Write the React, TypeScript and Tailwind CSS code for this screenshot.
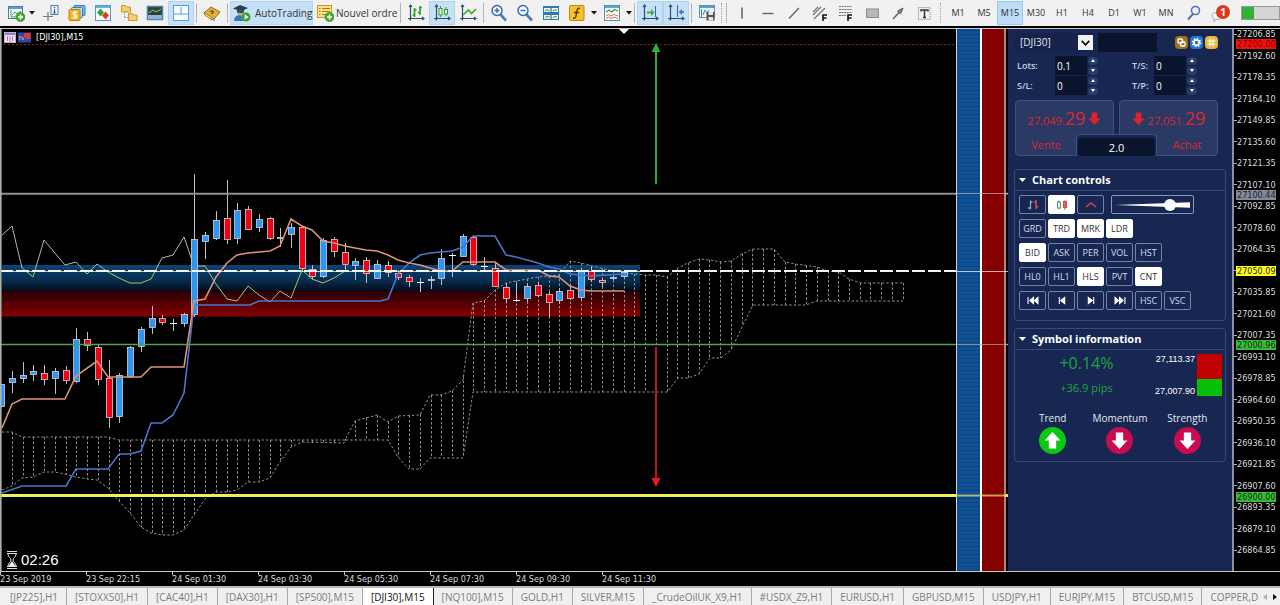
import { useState, type ReactNode } from "react";
import clsx from "clsx";

type Candle = [high: number, top: number, bottom: number, low: number, color: string];

const UP = "#2d96f0";
const DOWN = "#f00010";
const DOJI = "#ffffff";

const candles: Candle[] = [
  [384, 384, 407, 407, UP], [371, 378, 383, 393, UP], [362, 375, 379, 383, UP],
  [365, 371, 375, 381, UP], [365, 373, 380, 385, DOWN], [368, 371, 379, 394, UP],
  [366, 370, 381, 384, DOWN], [328, 339, 382, 383, UP], [332, 339, 346, 351, DOWN],
  [344, 347, 380, 385, DOWN], [360, 378, 418, 428, DOWN], [373, 375, 417, 423, UP],
  [346, 347, 377, 378, UP], [327, 329, 347, 352, UP], [306, 318, 328, 334, UP],
  [315, 318, 323, 325, DOWN], [319, 323, 324, 331, DOJI], [313, 314, 324, 327, UP],
  [174, 239, 315, 317, UP], [232, 235, 242, 259, UP], [211, 220, 239, 240, UP],
  [180, 218, 240, 244, DOWN], [203, 210, 239, 244, UP], [206, 209, 230, 230, DOWN],
  [214, 219, 228, 232, UP], [217, 218, 239, 240, DOWN], [228, 237, 239, 247, UP],
  [223, 227, 235, 248, UP], [226, 227, 269, 272, DOWN], [265, 269, 277, 279, DOWN],
  [238, 240, 277, 278, UP], [237, 239, 252, 257, DOWN], [243, 252, 265, 270, DOWN],
  [258, 261, 266, 280, UP], [257, 260, 274, 283, DOWN], [260, 264, 279, 279, UP],
  [261, 265, 273, 277, DOWN], [270, 273, 278, 280, DOWN], [275, 277, 282, 287, DOWN],
  [278, 282, 283, 292, DOJI], [276, 279, 281, 289, UP], [249, 258, 279, 285, UP],
  [253, 255, 256, 277, DOJI], [234, 236, 257, 257, UP], [236, 237, 265, 266, DOWN],
  [257, 266, 267, 270, DOJI], [263, 268, 287, 287, DOWN], [283, 287, 299, 303, DOWN],
  [283, 300, 301, 302, DOJI], [283, 286, 299, 302, UP], [282, 285, 296, 297, DOWN],
  [292, 294, 303, 317, DOWN], [288, 291, 301, 304, UP], [287, 290, 299, 300, DOWN],
  [268, 270, 298, 300, UP], [267, 271, 280, 282, DOWN], [278, 280, 283, 287, DOWN],
  [276, 277, 279, 280, UP], [271, 272, 277, 278, UP],
];

const tenkan =
  "2,428 12,404 22,399 65,399 76,376 97,361 108,377 141,377 151,367 184,367 194,301 205,299 216,277 227,263 237,255 248,253 259,252 270,251 280,246 291,219 302,226 312,230 323,241 334,243 345,246 355,248 366,250 377,251 388,255 398,260 409,263 420,265 430,268 441,271 452,271 463,262 495,262 506,270 538,270 549,276 559,277 570,286 581,290 591,291 624,291";
const kijun =
  "2,493 22,486 66,486 76,469 108,469 119,454 130,454 141,451 151,423 162,423 173,415 184,393 194,305 250,305 259,301 380,301 388,299 398,274 409,263 420,255 430,253 441,252 452,251 463,247 473,236 495,236 506,255 516,257 527,260 538,263 549,267 559,269 570,274 591,276 624,274";
const chikou =
  "2,235 12,226 22,268 33,277 44,240 65,265 76,262 87,274 97,264 108,272 119,278 130,283 141,283 151,279 162,258 173,255 184,237 194,266 205,266 216,284 227,299 237,301 248,286 259,295 270,302 280,291 291,298 302,270 312,279 323,283 334,278 345,271";

const spanTop = [
  [2, 432], [12, 432], [22, 437], [108, 437], [119, 440], [345, 440], [355, 421], [366, 418],
  [377, 415], [388, 422], [398, 416], [420, 415], [430, 395], [441, 395], [452, 391], [463, 380],
  [473, 303], [484, 301], [495, 290], [506, 283], [516, 281], [538, 277], [559, 275], [570, 261],
  [581, 263], [592, 266], [613, 271], [635, 274], [645, 275], [656, 275], [667, 277], [678, 268],
  [688, 263], [699, 259], [710, 260], [721, 262], [731, 261], [742, 254], [753, 249], [774, 249],
  [785, 262], [795, 264], [817, 267], [828, 271], [839, 272], [849, 279], [860, 283], [903, 283],
];
const spanBottom = [
  [2, 490], [12, 486], [22, 478], [33, 477], [44, 472], [55, 472], [65, 474], [76, 477],
  [87, 479], [97, 480], [108, 488], [119, 501], [130, 513], [141, 527], [151, 533], [162, 535],
  [173, 535], [184, 530], [194, 515], [205, 499], [216, 492], [227, 492], [237, 490], [248, 482],
  [259, 482], [270, 478], [280, 462], [291, 447], [302, 442], [344, 443], [346, 440], [388, 440],
  [398, 457], [409, 469], [420, 469], [430, 458], [463, 458], [473, 392], [667, 392], [678, 378],
  [688, 378], [699, 374], [710, 358], [721, 358], [731, 350], [742, 327], [753, 305], [806, 305],
  [817, 301], [903, 301],
];

const barX = (i: number) => 1.3 + i * 10.73;

function valueAt(points: number[][], x: number) {
  for (let i = 1; i < points.length; i++) {
    const [x0, y0] = points[i - 1];
    const [x1, y1] = points[i];
    if (x <= x1) return y0 + ((y1 - y0) * (x - x0)) / (x1 - x0);
  }
  return points[points.length - 1][1];
}

const timeLabels = [
  "23 Sep 2019", "23 Sep 22:15", "24 Sep 01:30", "24 Sep 03:30",
  "24 Sep 05:30", "24 Sep 07:30", "24 Sep 09:30", "24 Sep 11:30",
];

const TOP_PRICE = 27206.85;
const PRICE_STEP = 14.25;
const prices = Array.from({ length: 25 }, (_, k) => (TOP_PRICE - k * PRICE_STEP).toFixed(2));

const priceTags = [
  { price: 27200.0, style: "bg-[#f01010] text-[#900000]" },
  { price: 27100.44, style: "bg-[#84889a] text-[#20242c]" },
  { price: 27050.09, style: "bg-[#fcfc20] text-[#303000]" },
  { price: 27000.96, style: "bg-[#3cb83c] text-[#063806]" },
  { price: 26900.0, style: "bg-[#3cb83c] text-[#063806]" },
];

const symbolTabs = [
  "[JP225],H1", "[STOXX50],H1", "[CAC40],H1", "[DAX30],H1", "[SP500],M15", "[DJI30],M15",
  "[NQ100],M15", "GOLD,H1", "SILVER,M15", "_CrudeOilUK_X9,H1", "#USDX_Z9,H1", "EURUSD,H1",
  "GBPUSD,M15", "USDJPY,H1", "EURJPY,M15", "BTCUSD,M15", "COPPER,D",
];

const timeframes = ["M1", "M5", "M15", "M30", "H1", "H4", "D1", "W1", "MN"];

/* ---------- toolbar ---------- */

function Icon({ children }: { children: ReactNode }) {
  return (
    <svg viewBox="0 0 18 18" className="h-[18px] w-[18px] shrink-0" fill="none">
      {children}
    </svg>
  );
}

function Tool({ label, active, narrow, children }: { label: string; active?: boolean; narrow?: boolean; children: ReactNode }) {
  return (
    <button
      aria-label={label}
      className={clsx(
        "flex h-6 shrink-0 items-center justify-center",
        narrow ? "w-6" : "w-[26px]",
        active && "border border-[#b0d4f0] bg-[#c6e0f7]"
      )}
    >
      <Icon>{children}</Icon>
    </button>
  );
}

function Caret({ label }: { label: string }) {
  return (
    <button aria-label={label} className="flex h-6 w-[7px] shrink-0 items-center justify-center">
      <svg viewBox="0 0 6 4" className="h-1 w-1.5">
        <path d="M0 0h6L3 3.6z" fill="#111" />
      </svg>
    </button>
  );
}

const Sep = () => <div className="mx-0.5 h-5 w-px shrink-0 bg-[#b4b4b4]" />;
const Grip = () => <div className="mx-px h-5 w-0.5 shrink-0 border-l border-dotted border-[#a0a0a0]" />;

const Axes = () => (
  <path d="M3.5 1v15.5M1 14.500h15.500M2 3l1.500-2L5 3M15 13l2 1.500-2 1.500M2.500 15.500l2-2" stroke="#34506e" strokeWidth="1.200" />
);

const Plus = () => (
  <>
    <circle cx="13.500" cy="13" r="4.500" fill="#3fae2f" stroke="#2a8020" strokeWidth=".6" />
    <path d="M11 13h5M13.500 10.500v5" stroke="#fff" strokeWidth="1.600" />
  </>
);

function Toolbar() {
  const [frame, setFrame] = useState("M15");
  return (
    <header className="flex h-[26px] shrink-0 items-center overflow-hidden bg-[#f1f1f1] pl-1 text-[10px] text-[#333]">
      <Tool label="New chart" narrow>
        <rect x="1.500" y="2.500" width="14" height="12" fill="#f4faff" stroke="#4a7ca8" />
        <path d="M2 4h13" stroke="#5aa0d0" strokeWidth="2" />
        <path d="M4 6v7h10M5 11l3-3 2 2 4-3" stroke="#4f9a5a" />
        <Plus />
      </Tool>
      <Caret label="Chart list" />
      <div className="w-[3px] shrink-0" />
      <Tool label="Market watch">
        <path d="M6 8v9M1 12.500h10" stroke="#777" strokeWidth="1.200" />
        <rect x="9" y="1.500" width="7" height="9" fill="#eaf4ff" stroke="#5580aa" />
        <path d="M12.500 3v1.300M12.500 5.500v3.500M11.500 9h2" stroke="#234a80" strokeWidth="1.200" />
      </Tool>
      <Tool label="Symbols">
        <rect x="6" y="1.500" width="11" height="10" rx="1" fill="#7db9ee" stroke="#3a78b4" />
        <rect x="3.500" y="3.500" width="11" height="10" rx="1" fill="#b6dafa" stroke="#3a78b4" />
        <rect x="1" y="5.500" width="11" height="11" rx="1" fill="#f2b822" stroke="#b98208" />
        <path d="M9 8.500c-1-1.200-4-1-4 .8 0 2 4 1 4 2.900 0 1.800-3 2-4.300.7M6.900 7v8" stroke="#fff" strokeWidth="1.200" />
      </Tool>
      <Tool label="Trade">
        <rect x="1.500" y="1.500" width="15" height="15" fill="#f6fbff" stroke="#5a9ac4" />
        <path d="M2 3h14" stroke="#68b2e0" strokeWidth="2" />
        <path d="M6.500 4.500L3 8.500l3.500 4 3.500-4z" fill="#2fa32f" />
        <path d="M11.500 15.500L8 11.500l3.500-4 3.500 4z" fill="#e33a22" />
      </Tool>
      <Tool label="Navigator">
        <path d="M1.500 1.500h4l1 1.500h4v5h-9zM8.500 9.500h4l1 1.500h3.500v5.500H8.500z" fill="#f3d06c" stroke="#c89a30" />
        <path d="M4.500 8v5.500H8" stroke="#888" strokeDasharray="1 1" />
      </Tool>
      <Tool label="Terminal">
        <rect x="1.500" y="2.500" width="15" height="13" fill="#2c4238" stroke="#4e82b6" strokeWidth="1.500" />
        <path d="M2 11h14v4H2z" fill="#8fb4d8" />
        <path d="M3 9l4-3 3 2 5-3" stroke="#a8c848" />
      </Tool>
      <Tool label="Strategy tester" active>
        <rect x="1.500" y="1.500" width="15" height="15" fill="#f8fcff" stroke="#5ba0dc" />
        <path d="M2 10h14M9 3v7" stroke="#5ba0dc" />
      </Tool>
      <Sep />
      <Tool label="MetaEditor">
        <path d="M1 9l7-6 9 5-6 7-2 1z" fill="#e2b43a" stroke="#8c6a14" />
        <path d="M1 9l9 5 1.500 2.500L2 11.500z" fill="#fff6d0" stroke="#8c6a14" strokeWidth=".8" />
        <path d="M7 8c1-2 4-1 3 .6-.5.8-1.500.8-1.500 1.600" stroke="#7a4a00" strokeWidth="1.400" />
      </Tool>
      <Sep />
      <button className="flex h-6 w-[83px] shrink-0 items-center gap-1 border border-[#b4d6f0] bg-[#c6e0f7] pl-0.5 font-['Open_Sans',sans-serif]">
        <Icon>
          <path d="M1 17c0-4 3-6 6-6s6 2 6 6z" fill="#3b78ba" />
          <circle cx="7.500" cy="8" r="3.500" fill="#e0ac7c" />
          <path d="M0 4.500L7 1l8 3-7 3.500z" fill="#2c3f52" />
          <path d="M4 6v2.500c2 1 5 1 7 0V6" fill="#384c60" />
          <circle cx="13" cy="13" r="4.500" fill="#36a634" />
          <path d="M11.700 10.600v4.800l4-2.400z" fill="#fff" />
        </Icon>
        AutoTrading
      </button>
      <button className="flex h-6 w-[85px] shrink-0 items-center gap-0.5 pl-[3px] font-['Open_Sans',sans-serif] whitespace-nowrap">
        <Icon>
          <rect x="1.500" y="1.500" width="14" height="12" fill="#fae28a" stroke="#c49a28" />
          <path d="M6 4.500h8M6 7.500h8M6 10.500h8M3 4.500h1.500M3 7.500h1.500M3 10.500h1.500" stroke="#a87a18" />
          <Plus />
        </Icon>
        Nouvel ordre
      </button>
      <Sep />
      <Tool label="Bar chart">
        <Axes />
        <path d="M7.500 4v9M5.500 11h2M7.500 6h2M13 2v9M11 8.500h2M13 3.500h2" stroke="#2fa02c" strokeWidth="1.700" />
      </Tool>
      <Tool label="Candlesticks" active>
        <Axes />
        <path d="M7.500 2v11M13 3v9" stroke="#2fa02c" />
        <rect x="6" y="4.500" width="3" height="6.500" fill="#e9ffe6" stroke="#2fa02c" />
        <rect x="11.500" y="5.500" width="3" height="4.500" fill="#e9ffe6" stroke="#2fa02c" />
      </Tool>
      <Tool label="Line chart">
        <Axes />
        <path d="M4 11l5.500-5 3 3.500L17 5" stroke="#3fa62e" strokeWidth="1.600" />
      </Tool>
      <Sep />
      <Tool label="Zoom in">
        <path d="M10 10l6 6.500" stroke="#5478ac" strokeWidth="2.600" />
        <circle cx="7" cy="6.500" r="5" fill="#f4f9ff" stroke="#3668a8" strokeWidth="1.400" />
        <path d="M4.500 6.500h5M7 4v5" stroke="#3668a8" strokeWidth="1.400" />
      </Tool>
      <Tool label="Zoom out">
        <path d="M10 10l6 6.500" stroke="#5478ac" strokeWidth="2.600" />
        <circle cx="7" cy="6.500" r="5" fill="#f4f9ff" stroke="#3668a8" strokeWidth="1.400" />
        <path d="M4.500 6.500h5" stroke="#3668a8" strokeWidth="1.400" />
      </Tool>
      <Tool label="Tile windows">
        <rect x="1" y="2" width="16" height="14" fill="#3576ae" />
        <path d="M2 4h6.500v4H2zM9.700 4H16v4H9.700zM2 11h6.500v4H2zM9.700 11H16v4H9.700z" fill="#e9f8e8" />
        <path d="M3 7l2-1.500L7.500 7M11 7l2-1.500L15 6.500M3 13.500l2-1 2.500.5M11 13.500l2-1 2 .5" stroke="#3a9444" />
      </Tool>
      <Tool label="Indicators">
        <rect x="1.500" y="1.500" width="14.500" height="15" rx="1" fill="#f6c02e" stroke="#b88a14" />
        <path d="M12 4.500c-2-.8-2.800.6-3.200 3L8 12c-.4 2-1.300 2.500-3 2M6 8.500h5" stroke="#5a3c00" strokeWidth="1.400" />
      </Tool>
      <Caret label="Indicator list" />
      <div className="w-0.5 shrink-0" />
      <Tool label="Templates">
        <rect x="1.500" y="1.500" width="15" height="15" fill="#fdfdf8" stroke="#5a92b4" />
        <path d="M2 3h14" stroke="#60a8d4" strokeWidth="2" />
        <path d="M3 8l3-2 2.500 2 3-2.500L15 7" stroke="#2f9c34" strokeWidth="1.300" />
        <path d="M3 12l2.500-1.500L8 12l3-1.500 4 1.500M3 14.500L5.500 13 8 14.500 11 13l4 1.500" stroke="#c87060" />
      </Tool>
      <Caret label="Template list" />
      <Sep />
      <Tool label="Auto scroll" active>
        <Axes />
        <path d="M14.500 2v11" stroke="#3668a8" />
        <path d="M6 7.500h4V5l3.500 3.500L10 12V9.500H6z" fill="#4aa848" />
      </Tool>
      <Tool label="Chart shift" active>
        <Axes />
        <path d="M10.500 1v12" stroke="#3668a8" />
        <path d="M17 7h-2V5l-3.500 3 3.500 3V9h2z" fill="#4878c0" />
      </Tool>
      <Sep />
      <Tool label="Save picture">
        <rect x="1.500" y="1.500" width="15" height="12" fill="#eef7ff" stroke="#5a92b4" />
        <path d="M2 3h14" stroke="#58a2cc" strokeWidth="2" />
        <path d="M3.500 5v8M5 11l2-5 2 3 2-3" stroke="#3a8ab0" />
        <path d="M8.500 8h8v8.500h-8z" fill="#555" />
        <path d="M10.500 8h4.500v3h-4.500zM10.500 13h4.500v3.500h-4.500z" fill="#e4e4e4" />
      </Tool>
      <Grip />
      <Sep />
      <Tool label="Vertical line"><path d="M9 3.500v11" stroke="#555" strokeWidth="1.400" /></Tool>
      <Tool label="Horizontal line"><path d="M3.500 9.500h11" stroke="#666" strokeWidth="1.400" /></Tool>
      <Tool label="Trend line"><path d="M4 14.500L14 4" stroke="#666" strokeWidth="1.400" /></Tool>
      <Tool label="Fibonacci channel">
        <path d="M2 11l8-8M3 15L14 4M7 3L2 8" stroke="#777" strokeWidth="1.300" />
        <path d="M12 17v-6h4M12 14h3.500" stroke="#111" strokeWidth="1.600" />
      </Tool>
      <Tool label="Fibonacci retracement">
        <path d="M2 2.500h13M2 5.500h13M2 8.500h13M2 11.500h7" stroke="#777" strokeDasharray="2 .6" />
        <path d="M11 17v-6h4M11 14h3.500" stroke="#111" strokeWidth="1.600" />
      </Tool>
      <Tool label="Rectangle"><rect x="3.500" y="5" width="12" height="8.500" fill="#b8b8b8" stroke="#8c8c8c" /></Tool>
      <Tool label="Arrow">
        <path d="M4 15l6-6.500" stroke="#666" strokeWidth="1.600" />
        <path d="M14 4L8.500 7l3 3z" fill="#888" stroke="#555" />
      </Tool>
      <Tool label="Text">
        <rect x="3.500" y="3.500" width="11.500" height="12" stroke="#888" strokeDasharray="1 1" />
        <path d="M6 7.500V6h7v1.500M9.500 6v7.500M8 13.500h3" stroke="#333" strokeWidth="1.500" />
      </Tool>
      <div className="flex w-2 shrink-0 justify-center"><Grip /></div>
      {timeframes.map((t) => (
        <button
          key={t}
          onClick={() => setFrame(t)}
          className={clsx(
            "h-6 w-[26px] shrink-0 text-center font-['Open_Sans',sans-serif] text-[9px]",
            t === frame && "border border-[#9cc8ec] bg-[#bcdcf8]"
          )}
        >
          {t}
        </button>
      ))}
      <div className="w-0.5 shrink-0" />
      <Tool label="Search">
        <path d="M8 10l-5 5.500" stroke="#5a70b0" strokeWidth="2" />
        <circle cx="10.500" cy="6.500" r="4" fill="#eef4ff" stroke="#5a70b0" strokeWidth="1.600" />
      </Tool>
      <button aria-label="Notifications" className="relative ml-0.5 flex h-6 w-7 shrink-0 items-center">
        <svg viewBox="0 0 28 24" className="h-6 w-7">
          <path d="M3 14c0-3 10-3 10 1 0 3-4 4-6 3l-2 3v-3.500C3.500 17 3 15.500 3 14z" fill="#f4f4f4" stroke="#aaa" />
          <circle cx="14" cy="11" r="7" fill="#db3a22" />
        </svg>
        <span className="absolute top-[5px] left-0 w-7 text-center text-[10px] leading-3 font-bold text-white">1</span>
      </button>
      <div className="ml-1 flex h-3.5 flex-1 border border-[#999] bg-[#d4d6d4]">
        <div className="w-3 bg-[#2fb42f]" />
      </div>
    </header>
  );
}

/* ---------- chart ---------- */

function Plot() {
  const path = (pts: number[][]) => pts.map((p) => p.join(",")).join(" ");
  const stripes = Array.from({ length: 136 }, (_, i) => 30 + i * 4);
  return (
    <svg viewBox="0 29 1008 542" preserveAspectRatio="none" className="absolute inset-0 h-full w-full" fill="none">
      <defs>
        <linearGradient id="blueZone" x1="0" y1="0" x2="0" y2="1">
          <stop offset="0" stopColor="#0b4274" />
          <stop offset=".6" stopColor="#072c4e" />
          <stop offset="1" stopColor="#030c18" />
        </linearGradient>
        <linearGradient id="redZone" x1="0" y1="0" x2="0" y2="1">
          <stop offset="0" stopColor="#260004" />
          <stop offset="1" stopColor="#860000" />
        </linearGradient>
        <linearGradient id="chikouLine" gradientUnits="userSpaceOnUse" x1="0" y1="262" x2="0" y2="270">
          <stop offset="0" stopColor="#b8b8a8" />
          <stop offset="1" stopColor="#a4c470" />
        </linearGradient>
      </defs>
      <rect x="2" y="265" width="638" height="26" fill="url(#blueZone)" />
      <rect x="2" y="291" width="638" height="25.500" fill="url(#redZone)" />

      <g stroke="#b4b4aa" strokeWidth="1" strokeDasharray="2.500 2" opacity=".8">
        <polyline points={path(spanTop)} />
        <polyline points={path(spanBottom)} />
        {Array.from({ length: 84 }, (_, k) => k + 1).map((i) => {
          const x = Math.round(barX(i)) + 0.5;
          return <path key={i} d={`M${x} ${valueAt(spanTop, x)}V${valueAt(spanBottom, x)}`} />;
        })}
      </g>

      <path d="M0 44.500H956" stroke="#70282e" strokeDasharray="2 2" />
      <polyline points={chikou} stroke="url(#chikouLine)" />

      {candles.map(([high, top, bottom, low, color], i) => {
        const x = Math.round(barX(i));
        return (
          <g key={i}>
            <path d={`M${x + 0.5} ${high}V${low}`} stroke="#c0c0c0" />
            {color === DOJI ? (
              <rect x={x - 3} y={top} width="7" height="1" fill={color} />
            ) : (
              <rect x={x - 2.5} y={top + 0.5} width="6" height={Math.max(bottom - top - 1, 1)} fill={color} stroke="#d8d0d8" strokeWidth=".8" />
            )}
          </g>
        );
      })}

      <polyline points={kijun} stroke="#4c74cc" strokeWidth="1.600" />
      <polyline points={tenkan} stroke="#dc9478" strokeWidth="1.600" />

      <path d="M0 193.800H1008" stroke="#8c8e9a" strokeWidth="2" />
      <path d="M0 344.500H1008" stroke="#52a452" strokeWidth="1.600" />
      <path d="M0 495.500H1008" stroke="#eef05c" strokeWidth="3" />
      <path d="M0 271.500H640" stroke="#d0d488" />
      <path d="M0 271H956" stroke="#f4f4ec" strokeWidth="2" strokeDasharray="13 3" />

      <rect x="956" y="29" width="25" height="542" fill="#105094" />
      <rect x="982" y="29" width="23" height="542" fill="#880000" />
      <g strokeWidth="1">
        {stripes.map((y) => (
          <path key={y} d={`M956 ${y + 0.5}h25`} stroke="#0b4380" />
        ))}
        {stripes.map((y) => (
          <path key={y} d={`M982 ${y + 0.5}h23`} stroke="#7c0000" />
        ))}
      </g>
      <path d="M956.500 29v542" stroke="#c8d4e0" />
      <path d="M981 29v542" stroke="#fff" strokeWidth="2" />
      <path d="M1005 29v542" stroke="#d8b0a8" strokeWidth="1.500" />
      <g opacity=".7">
        <path d="M957 193.500h51" stroke="#c0b4bc" />
        <path d="M957 271.500h51" stroke="#fff" />
        <path d="M957 344.500h51" stroke="#a0b498" />
        <path d="M957 495.500h51" stroke="#e8e070" strokeWidth="2" />
      </g>

      <path d="M656 50V184" stroke="#32ac32" strokeWidth="2" />
      <path d="M656 43l-4.500 9h9z" fill="#32ac32" />
      <path d="M656 347v134" stroke="#c41818" strokeWidth="2" />
      <path d="M656 487l-4.500-9h9z" fill="#e81c1c" />
      <path d="M619 29h10l-5 5z" fill="#fff" />
      <path d="M.8 29v542" stroke="#b0b0b0" strokeWidth="1.600" />
    </svg>
  );
}

function ChartArea() {
  return (
    <section className="relative min-w-0 flex-1 bg-black text-white">
      <Plot />
      <div className="relative flex h-full flex-col justify-between">
        <div className="flex h-[17px] items-center gap-0.5 pl-1 font-['DejaVu_Sans_Condensed','DejaVu_Sans',sans-serif] text-[9px]">
          <svg viewBox="0 0 28 11" className="mr-0.5 h-[11px] w-7">
            <rect x=".5" y=".5" width="11" height="10" fill="#e8e4f4" stroke="#b8b0d8" />
            <path d="M1 2h10" stroke="#9080d0" strokeWidth="2" />
            <path d="M3.500 4v5M6 4v6M8.500 4v5" stroke="#c07898" />
            <rect x="14" y=".5" width="13" height="10" fill="#2c48b4" />
            <path d="M20 1h6.500v6H23l-3-2z" fill="#dc3838" />
            <path d="M16 8V4l3 4V5" stroke="#e8a0b0" />
          </svg>
          <span>[DJI30],M15</span>
        </div>
        <div className="flex items-center gap-[3px] pl-1.5 font-['Liberation_Sans',sans-serif] text-[15px]">
          <svg viewBox="0 0 12 20" className="h-5 w-3" fill="none" stroke="#ddd">
            <path d="M1 1.500h10M1 3.500h10M1 16.500h10M1 18.500h10M2 4c0 3.500 3 4 3 6s-3 3-3 6M10 4c0 3.500-3 4-3 6s3 3 3 6" />
            <path d="M6 11l3.500 5h-7z" fill="#eee" stroke="none" />
          </svg>
          <span>02:26</span>
        </div>
      </div>
    </section>
  );
}

function PriceAxis() {
  return (
    <div className="relative flex w-[46px] shrink-0 flex-col justify-between bg-black pb-4 font-['DejaVu_Sans_Condensed','DejaVu_Sans',sans-serif] text-[9px] text-[#dcdcdc]">
      {prices.map((p) => (
        <div key={p} className="flex h-2.5 items-center leading-[10px]">
          <span className="h-px w-[3px] bg-[#aaa]" />
          {p}
        </div>
      ))}
      {priceTags.map(({ price, style }) => (
        <div
          key={price}
          className={clsx("absolute right-1 left-0.5 h-2.5 pl-px leading-[10px]", style)}
          style={{ top: `${(((TOP_PRICE - price) / PRICE_STEP) * 21.5 * 100) / 542}%` }}
        >
          {price.toFixed(2)}
        </div>
      ))}
    </div>
  );
}

/* ---------- trading panel ---------- */

function Spin({ id, label, value }: { id: string; label: string; value: string }) {
  return (
    <div className="flex h-[19px] items-center">
      <label htmlFor={id} className="w-[38px] text-[9px] font-semibold text-[#c8d0e0]">{label}</label>
      <input id={id} defaultValue={value} className="h-[19px] w-8 bg-[#0a142c] px-0.5 text-[10px] text-white" />
      <div className="ml-px flex h-[18px] w-2.5 flex-col justify-between">
        <button aria-label={`${label} up`} className="flex h-2 items-center justify-center rounded-sm bg-[#2a3c6a]">
          <svg viewBox="0 0 4 3" className="h-[3px] w-1"><path d="M0 3h4L2 0z" fill="#fff" /></svg>
        </button>
        <button aria-label={`${label} down`} className="flex h-2 items-center justify-center rounded-sm bg-[#2a3c6a]">
          <svg viewBox="0 0 4 3" className="h-[3px] w-1"><path d="M0 0h4L2 3z" fill="#fff" /></svg>
        </button>
      </div>
    </div>
  );
}

function FatArrow({ up, className }: { up?: boolean; className: string }) {
  return (
    <svg viewBox="0 0 14 14" className={className} fill="currentColor">
      {up ? <path d="M7 0L0.500 7H4v6.500h6V7h3.500z" /> : <path d="M7 14L.5 7H4V.5h6V7h3.500z" />}
    </svg>
  );
}

function OrderForm() {
  return (
    <div className="flex flex-col px-[7px] pt-1">
      <div className="flex h-[19px] items-center">
        <div className="relative h-[19px] w-[78px] bg-[#16224a]">
          <select aria-label="Symbol" className="block h-[19px] w-full appearance-none pl-[5px] text-[10px] leading-[19px] text-[#e4e8f0]">
            <option>[DJI30]</option>
          </select>
          <span className="pointer-events-none absolute top-0.5 right-0 flex h-[15px] w-[15px] items-center justify-center bg-[#f2f2f2]">
            <svg viewBox="0 0 9 6" className="h-1.5 w-[9px]" fill="none"><path d="M.7.8l3.800 4L8.300.8" stroke="#111" strokeWidth="1.700" /></svg>
          </span>
        </div>
        <input aria-label="Comment" className="ml-[5px] h-[19px] w-[59px] bg-[#0a142c]" />
        <div className="ml-auto flex gap-0.5 pr-[7px]">
          <button aria-label="Link" className="h-[13px] w-[13px] rounded-sm bg-[#9c7420]">
            <svg viewBox="0 0 13 13" fill="none" stroke="#fff" strokeWidth="1.300"><rect x="3" y="3" width="4.500" height="4" rx="1" /><rect x="5.500" y="6" width="4.500" height="4" rx="1" /></svg>
          </button>
          <button aria-label="Settings" className="h-[13px] w-[13px] rounded-sm bg-[#2c74cc]">
            <svg viewBox="0 0 13 13" fill="none"><circle cx="6.500" cy="6.500" r="4" stroke="#fff" strokeWidth="1.500" strokeDasharray="1.600 1.500" /><circle cx="6.500" cy="6.500" r="2.700" stroke="#fff" strokeWidth="1.700" /></svg>
          </button>
          <button aria-label="Layout" className="h-[13px] w-[13px] rounded-sm bg-[#e4b840]">
            <svg viewBox="0 0 13 13" fill="none"><path d="M5 2.500v8M8 2.500v8M2.500 5h8M2.500 8h8" stroke="#fff" strokeWidth="1.100" /></svg>
          </button>
        </div>
      </div>
      <div className="mt-1 flex flex-col gap-px">
        <div className="flex pl-0.5">
          <Spin id="lots" label="Lots:" value="0.1" />
          <div className="ml-[34px] [&_label]:w-[22px]"><Spin id="ts" label="T/S:" value="0" /></div>
        </div>
        <div className="flex pl-0.5">
          <Spin id="sl" label="S/L:" value="0" />
          <div className="ml-[34px] [&_label]:w-[22px]"><Spin id="tp" label="T/P:" value="0" /></div>
        </div>
      </div>
      <div className="relative mt-[5px] mr-[7px] flex gap-[5px] text-[#dc2430]">
        <button className="flex h-14 flex-1 flex-col rounded border border-[#40507c] bg-[#2b3a64]">
          <span className="flex h-[34px] w-full items-center justify-center gap-[3px] leading-none">
            <span><span className="text-[11px]">27,049.</span><span className="text-[18px]">29</span></span>
            <FatArrow className="h-[13px] w-[13px]" />
          </span>
          <span className="w-[60px] pt-0.5 text-center text-[11px] leading-4">Vente</span>
        </button>
        <button className="flex h-14 flex-1 flex-col items-end rounded border border-[#40507c] bg-[#2b3a64]">
          <span className="flex h-[34px] w-full items-center justify-center gap-[3px] leading-none">
            <FatArrow className="h-[13px] w-[13px]" />
            <span><span className="text-[11px]">27,051.</span><span className="text-[18px]">29</span></span>
          </span>
          <span className="w-[60px] pt-0.5 text-center text-[11px] leading-4">Achat</span>
        </button>
        <div className="absolute inset-x-[61px] bottom-0 rounded-t border-x border-t border-[#40507c] bg-[#182752] px-px pt-[3px]">
          <input aria-label="Volume" defaultValue="2.0" className="block h-[18px] w-full rounded-sm bg-[#0a142c] text-center text-[11px] text-white" />
        </div>
      </div>
    </div>
  );
}

function Card({ title, className, children }: { title: string; className: string; children: ReactNode }) {
  return (
    <div className={clsx("mr-1.5 ml-1.5 rounded-sm border border-[#39497a]", className)}>
      <h2 className="flex h-[21px] items-center gap-1.5 border-b border-[#39497a] pl-1 text-[11px] font-bold text-white">
        <svg viewBox="0 0 7 4" className="h-1 w-[7px]"><path d="M0 0h7L3.500 4z" fill="#fff" /></svg>
        {title}
      </h2>
      {children}
    </div>
  );
}

const controlRows = [
  ["GRD", "TRD", "MRK", "LDR"],
  ["BID", "ASK", "PER", "VOL", "HST"],
  ["HL0", "HL1", "HLS", "PVT", "CNT"],
];

function Control({ label, on, onClick, children }: { label: string; on?: boolean; onClick?: () => void; children?: ReactNode }) {
  return (
    <button
      aria-label={label}
      onClick={onClick}
      className={clsx(
        "flex h-[19px] w-[27px] items-center justify-center rounded-[2px] border text-[9px]",
        on ? "border-white bg-white text-[#333]" : "border-[#7482a8] text-[#d4dae8]"
      )}
    >
      {children ?? label}
    </button>
  );
}

const navIcons: [string, string][] = [
  ["First", "M1 1v8M7 1.500L3 5l4 3.500zM12 1.500L8 5l4 3.500z"],
  ["Previous", "M3.500 1v8M9.500 1.500L5 5l4.500 3.500z"],
  ["Next", "M9.500 1v8M3.500 1.500L8 5 3.500 8.500z"],
  ["Last", "M12 1v8M6 1.500L10 5 6 8.500zM1 1.500L5 5 1 8.500z"],
];

function ChartControls() {
  const [enabled, setEnabled] = useState(["TRD", "MRK", "LDR", "BID", "HLS", "CNT"]);
  const toggle = (k: string) =>
    setEnabled((list) => (list.includes(k) ? list.filter((v) => v !== k) : [...list, k]));

  return (
    <Card title="Chart controls" className="mt-[13px] h-[152px]">
      <div className="flex flex-col gap-[5px] px-1 pt-1">
        <div className="flex gap-0.5">
          <Control label="Bars">
            <svg viewBox="0 0 12 12" className="h-3 w-3" fill="none">
              <path d="M3.500 1.500v9M1 9h2.500M3.500 3h2" stroke="#8ab0a0" strokeWidth="1.300" />
              <path d="M9 1v9M7 3h2M9 8h2.500" stroke="#d04858" strokeWidth="1.600" />
            </svg>
          </Control>
          <Control label="Candles" on>
            <svg viewBox="0 0 12 12" className="h-3 w-3" fill="none">
              <path d="M3 1.500v9M9 1v10" stroke="#777" />
              <rect x="1.500" y="3" width="3" height="6" fill="#e8f4e8" stroke="#5a9870" />
              <rect x="7.500" y="2.500" width="3" height="6" fill="#e86060" stroke="#d04848" />
            </svg>
          </Control>
          <Control label="Line">
            <svg viewBox="0 0 12 12" className="h-3 w-3" fill="none"><path d="M1 8l5-4 5 4" stroke="#d0405c" strokeWidth="1.600" /></svg>
          </Control>
          <div className="relative ml-[5px] flex h-[19px] w-[83px] items-center rounded-[2px] border border-[#8a96b8] px-[3px]">
            <svg viewBox="0 0 75 6" className="pointer-events-none absolute h-1.5 w-[75px]"><path d="M0 3L75 .3v5.400z" fill="#fff" /></svg>
            <input
              type="range"
              aria-label="Zoom"
              defaultValue={78}
              className="relative h-3.5 w-full appearance-none bg-transparent [&::-webkit-slider-thumb]:h-3 [&::-webkit-slider-thumb]:w-3 [&::-webkit-slider-thumb]:appearance-none [&::-webkit-slider-thumb]:rounded-full [&::-webkit-slider-thumb]:bg-white"
            />
          </div>
        </div>
        {controlRows.map((row) => (
          <div key={row[0]} className="flex gap-0.5">
            {row.map((k) => (
              <Control key={k} label={k} on={enabled.includes(k)} onClick={() => toggle(k)} />
            ))}
          </div>
        ))}
        <div className="flex gap-0.5">
          {navIcons.map(([label, d]) => (
            <Control key={label} label={label}>
              <svg viewBox="0 0 13 10" className="h-[9px] w-3"><path d={d} fill="#fff" stroke="#fff" strokeWidth="1.200" /></svg>
            </Control>
          ))}
          <Control label="HSC" />
          <Control label="VSC" />
        </div>
      </div>
    </Card>
  );
}

const signals = [
  { name: "Trend", up: true },
  { name: "Momentum", up: false },
  { name: "Strength", up: false },
];

function SymbolInfo() {
  return (
    <Card title="Symbol information" className="mt-[7px] h-[134px]">
      <div className="flex pt-1 pr-[3px]">
        <div className="flex-1 pl-[3px] text-center text-[#1ea43c]">
          <div className="text-[16px] leading-[18px]">+0.14%</div>
          <div className="mt-1.5 text-[11px] leading-5">+36.9 pips</div>
        </div>
        <div className="flex h-[42px] flex-col justify-between pr-0.5 text-right font-['Liberation_Sans',sans-serif] text-[9px] leading-[10px] text-white">
          <span>27,113.37</span>
          <span>27,007.90</span>
        </div>
        <div className="w-[25px]">
          <div className="h-[25px] bg-[#c20000]" />
          <div className="h-[17px] bg-[#08c008]" />
        </div>
      </div>
      <div className="grid grid-cols-3 px-1 pt-3 text-center text-[10px] leading-4 text-[#e4e8f0]">
        {signals.map(({ name, up }) => (
          <div key={name} className="flex flex-col items-center">
            <span>{name}</span>
            <span className={clsx("mt-px flex h-[27px] w-[27px] items-center justify-center rounded-full text-white", up ? "bg-[#0cc814]" : "bg-[#c80c50]")}>
              <FatArrow up={up} className="h-[17px] w-[17px]" />
            </span>
          </div>
        ))}
      </div>
    </Card>
  );
}

export default function App() {
  const [tab, setTab] = useState("[DJI30],M15");
  return (
    <div className="flex h-screen flex-col overflow-hidden bg-black font-['Open_Sans',sans-serif]">
      <Toolbar />
      <main className="mt-0.5 flex min-h-0 flex-1 border-y border-[#c8c8c8]">
        <ChartArea />
        <aside className="w-[226px] shrink-0 border-r-2 border-[#8c90a0] bg-[#182752]">
          <OrderForm />
          <ChartControls />
          <SymbolInfo />
        </aside>
        <PriceAxis />
      </main>
      <div className="flex h-3.5 shrink-0 font-['DejaVu_Sans_Condensed','DejaVu_Sans',sans-serif] text-[9px] leading-[14px] text-[#dcdcdc]">
        {timeLabels.map((t) => (
          <div key={t} className="relative w-[86px] whitespace-nowrap">
            <span className="absolute top-0 left-0 h-[3px] w-px bg-[#c8c8c8]" />
            {t}
          </div>
        ))}
      </div>
      <nav className="flex h-[19px] shrink-0 items-stretch border-t-2 border-[#b8b8b8] bg-[#f0f0f0] text-[10px] leading-4 text-[#7c7c7c]">
        <div className="flex min-w-0 flex-1 overflow-hidden pl-0.5">
          {symbolTabs.map((t) => (
            <button
              key={t}
              onClick={() => setTab(t)}
              className={clsx(
                "shrink-0 px-2 whitespace-nowrap",
                t === tab ? "border-r border-[#222] bg-white text-[#111]" : "border-r border-[#a8a8a8] last:border-r-0 last:pr-0"
              )}
            >
              {t}
            </button>
          ))}
        </div>
        <button aria-label="Scroll left" className="flex w-2.5 shrink-0 items-center justify-center">
          <svg viewBox="0 0 4 6" className="h-1.5 w-1"><path d="M4 0v6L0 3z" fill="#aaa" /></svg>
        </button>
        <button aria-label="Scroll right" className="flex w-2.5 shrink-0 items-center justify-center">
          <svg viewBox="0 0 4 6" className="h-1.5 w-1"><path d="M0 0v6l4-3z" fill="#111" /></svg>
        </button>
      </nav>
    </div>
  );
}
